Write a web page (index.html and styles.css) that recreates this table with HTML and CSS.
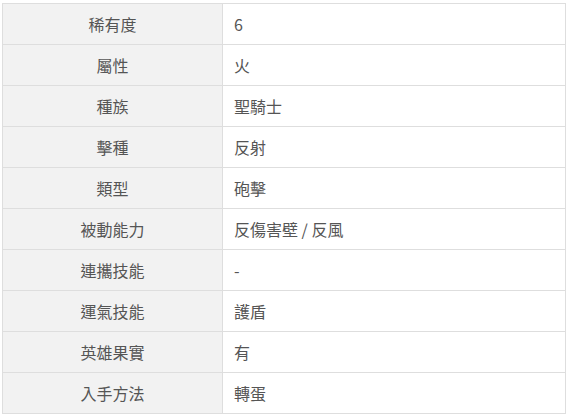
FILE: index.html
```html
<!DOCTYPE html>
<html lang="zh-Hant">
<head>
<meta charset="utf-8">
<link rel="stylesheet" href="styles.css">
</head>
<body>
<div class="wrap">
<table class="info">
<tbody>
<tr><th>稀有度</th><td>6</td></tr>
<tr><th>屬性</th><td>火</td></tr>
<tr><th>種族</th><td>聖騎士</td></tr>
<tr><th>擊種</th><td>反射</td></tr>
<tr><th>類型</th><td>砲擊</td></tr>
<tr><th>被動能力</th><td>反傷害壁 / 反風</td></tr>
<tr><th>連攜技能</th><td>-</td></tr>
<tr><th>運氣技能</th><td>護盾</td></tr>
<tr><th>英雄果實</th><td>有</td></tr>
<tr><th>入手方法</th><td>轉蛋</td></tr>
</tbody>
</table>
</div>
</body>
</html>
```
FILE: styles.css
```css
html, body {
  margin: 0;
  padding: 0;
  background: #fff;
}
.wrap {
  padding: 3px 2px;
}
.info {
  border-collapse: collapse;
  width: 564px;
  font-family: "Noto Sans CJK TC", "Noto Sans", sans-serif;
  font-size: 16px;
  color: #555;
}
.info th, .info td {
  border: 1px solid #dedede;
  height: 41px;
  padding: 0;
  line-height: 20px;
  box-sizing: border-box;
}
.info th {
  width: 220px;
  background: #f2f2f2;
  font-weight: normal;
  text-align: center;
}
.info td {
  text-align: left;
  padding-left: 11px;
}
```
